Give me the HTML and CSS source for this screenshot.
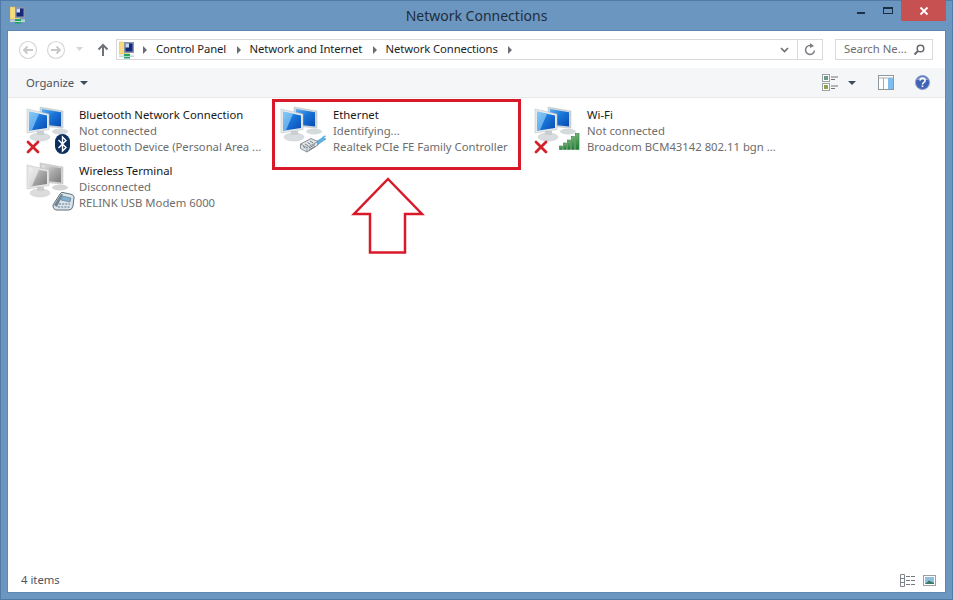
FILE: index.html
```html
<!DOCTYPE html>
<html lang="en">
<head>
<meta charset="utf-8">
<title>Network Connections</title>
<link rel="stylesheet" href="styles.css">
</head>
<body>
<svg class="defs" width="0" height="0" aria-hidden="true">
  <defs>
    <linearGradient id="scr" x1="0" y1="0" x2="1" y2="1">
      <stop offset="0" stop-color="#5fb2f0"/><stop offset=".45" stop-color="#1a76da"/><stop offset="1" stop-color="#0b4ab0"/>
    </linearGradient>
    <linearGradient id="gscr" x1="0" y1="0" x2="1" y2="1">
      <stop offset="0" stop-color="#e8e8e8"/><stop offset=".5" stop-color="#a8a8a8"/><stop offset="1" stop-color="#7c7c7c"/>
    </linearGradient>
    <linearGradient id="bar" x1="0" y1="0" x2="0" y2="1">
      <stop offset="0" stop-color="#6fb56f"/><stop offset="1" stop-color="#1f7a36"/>
    </linearGradient>
    <symbol id="pcs" viewBox="0 0 52 54">
      <ellipse cx="36" cy="29.500" rx="8" ry="3" fill="#d5dadd"/>
      <path d="M16 5 L39 9 V26 L16 24 Z" fill="#cfd6da" stroke="#b4bcc2" stroke-width=".5"/>
      <path d="M18 7 L37 10.300 V24.500 L18 22.500 Z" fill="url(#scr)"/>
      <ellipse cx="16" cy="35" rx="10" ry="4" fill="#d9dddf" stroke="#c3c8cb" stroke-width=".5"/>
      <path d="M13 29 H20 V33 H13 Z" fill="#c9ced1"/>
      <path d="M3 7 L25 12 V27.500 L3 31 Z" fill="#e6eaec" stroke="#b4bcc2" stroke-width=".5"/>
      <path d="M5 9.500 L23 13.500 V26 L5 28.700 Z" fill="url(#scr)"/>
      <path d="M5 9.500 L15 11.700 L8 28.300 L5 28.700 Z" fill="#9fd8fb" opacity=".6"/>
    </symbol>
    <symbol id="pcs-grey" viewBox="0 0 52 54">
      <ellipse cx="36" cy="29.500" rx="8" ry="3" fill="#d5d5d5"/>
      <path d="M16 5 L39 9 V26 L16 24 Z" fill="#d2d2d2" stroke="#bcbcbc" stroke-width=".5"/>
      <path d="M18 7 L37 10.300 V24.500 L18 22.500 Z" fill="url(#gscr)"/>
      <ellipse cx="16" cy="35" rx="10" ry="4" fill="#dcdcdc" stroke="#c6c6c6" stroke-width=".5"/>
      <path d="M13 29 H20 V33 H13 Z" fill="#cccccc"/>
      <path d="M3 7 L25 12 V27.500 L3 31 Z" fill="#e6e6e6" stroke="#bcbcbc" stroke-width=".5"/>
      <path d="M5 9.500 L23 13.500 V26 L5 28.700 Z" fill="url(#gscr)"/>
      <path d="M5 9.500 L15 11.700 L8 28.300 L5 28.700 Z" fill="#f4f4f4" opacity=".65"/>
    </symbol>
    <symbol id="cross" viewBox="0 0 14 14">
      <path d="M2 2 L12 12 M12 2 L2 12" stroke="#d2232a" stroke-width="2.800" stroke-linecap="round" fill="none"/>
    </symbol>
    <symbol id="netfolder" viewBox="0 0 16 18">
      <path d="M0 1 H5 L6 2.500 H10 V13 H0 Z" fill="#f6dc80" stroke="#d9b850" stroke-width=".5"/>
      <rect x="5" y="1" width="10" height="11" fill="#8a97ab"/>
      <rect x="6.500" y="2.500" width="7" height="8" fill="#14287c"/>
      <rect x="6.500" y="2.500" width="3.500" height="4" fill="#c9d8f0"/>
      <rect x="0" y="13.500" width="15" height="1.200" fill="#d5dde0"/>
      <rect x="5" y="13" width="6" height="4.500" fill="#1fa36a"/>
      <rect x="0" y="15" width="15" height="1" fill="#b9d9cc"/>
    </symbol>
  </defs>
</svg>

<div class="window">
  <header class="titlebar">
    <svg class="title-icon" width="16" height="18"><use href="#netfolder"/></svg>
    <h1 class="title">Network Connections</h1>
    <div class="controls">
      <svg class="ctl" width="26" height="21" viewBox="0 0 26 21"><rect x="7" y="12" width="8" height="2" fill="#1b2f45"/></svg>
      <svg class="ctl ctl-max" width="26" height="21" viewBox="0 0 26 21"><rect x="7.500" y="7.500" width="9" height="6" fill="none" stroke="#1b2f45"/><rect x="7" y="7" width="10" height="2" fill="#1b2f45"/></svg>
      <div class="close">
        <svg width="10" height="10" viewBox="0 0 10 10"><path d="M1.500 1.500 L8.500 8.500 M8.500 1.500 L1.500 8.500" stroke="#fff" stroke-width="1.800"/></svg>
      </div>
    </div>
  </header>

  <main class="pane">
    <nav class="navbar">
      <svg class="nav-circle" width="20" height="20" viewBox="0 0 20 20"><circle cx="10" cy="10" r="8.500" fill="none" stroke="#d4d6d8" stroke-width="1.200"/><path d="M15 10 H6 M9.500 6.500 L6 10 L9.500 13.500" fill="none" stroke="#c6c8ca" stroke-width="1.800"/></svg>
      <svg class="nav-circle" width="20" height="20" viewBox="0 0 20 20"><circle cx="10" cy="10" r="8.500" fill="none" stroke="#d4d6d8" stroke-width="1.200"/><path d="M5 10 H14 M10.500 6.500 L14 10 L10.500 13.500" fill="none" stroke="#c6c8ca" stroke-width="1.800"/></svg>
      <svg class="nav-drop" width="8" height="5" viewBox="0 0 8 5"><path d="M0 0 H7 L3.500 4 Z" fill="#d4d6d8"/></svg>
      <svg class="nav-up" width="12" height="14" viewBox="0 0 12 14"><path d="M6 13 V2 M1.500 6.500 L6 2 L10.500 6.500" fill="none" stroke="#6e7378" stroke-width="2"/></svg>
      <div class="address">
        <svg class="addr-icon" width="16" height="18"><use href="#netfolder"/></svg>
        <span class="crumb-sep"></span><span class="crumb">Control Panel</span>
        <span class="crumb-sep"></span><span class="crumb">Network and Internet</span>
        <span class="crumb-sep"></span><span class="crumb">Network Connections</span>
        <span class="crumb-sep"></span>
        <svg class="addr-chev" width="9" height="6" viewBox="0 0 9 6"><path d="M1 1 L4.500 4.500 L8 1" fill="none" stroke="#6b6f73" stroke-width="1.600"/></svg>
        <span class="addr-refresh">
          <svg width="12" height="13" viewBox="0 0 12 13"><path d="M8.500 3.200 A4.500 4.500 0 1 0 10.500 7.500" fill="none" stroke="#7b7f83" stroke-width="1.500"/><path d="M6 0 L10 3 L6 5 Z" fill="#7b7f83"/></svg>
        </span>
      </div>
      <div class="search">
        <span class="search-text">Search Ne...</span>
        <svg width="12" height="12" viewBox="0 0 12 12"><circle cx="7.500" cy="4.500" r="3.300" fill="none" stroke="#666a6e" stroke-width="1.500"/><path d="M5 7 L1.500 10.500" stroke="#666a6e" stroke-width="2"/></svg>
      </div>
    </nav>

    <div class="toolbar">
      <span class="organize">Organize</span>
      <span class="caret"></span>
      <span class="tool-spacer"></span>
      <svg class="tool-views" width="17" height="17" viewBox="0 0 17 17">
        <rect x=".500" y=".500" width="7" height="7" fill="#fff" stroke="#9aa0a6"/><rect x="2" y="2" width="4" height="4" fill="#6d9a80"/>
        <rect x=".500" y="9.500" width="7" height="7" fill="#fff" stroke="#9aa0a6"/><rect x="2" y="11" width="4" height="4" fill="#8fa14b"/>
        <path d="M9 3 H16 M9 5.500 H13 M9 12 H16 M9 14.500 H13" stroke="#6f747a"/>
      </svg>
      <span class="caret caret-views"></span>
      <svg class="tool-pane" width="16" height="15" viewBox="0 0 16 15">
        <rect x=".500" y=".500" width="15" height="14" fill="#fff" stroke="#8f969c"/>
        <path d="M.500 3 H15.500 M5.500 3 V14" stroke="#a5abb0"/>
        <rect x="10" y="3" width="5" height="11" fill="#7fbcf0"/>
      </svg>
      <svg class="tool-help" width="15" height="15" viewBox="0 0 15 15">
        <circle cx="7.500" cy="7.500" r="7" fill="#3f63b4" stroke="#8a9cc9"/>
        <path d="M2 5 A6 6 0 0 1 13 5 Z" fill="#8fa6dc"/>
        <path d="M5.200 5.600 A2.400 2.300 0 1 1 8.600 7.600 Q7.500 8.200 7.500 9.500" fill="none" stroke="#fff" stroke-width="1.500"/>
        <rect x="6.700" y="10.500" width="1.600" height="1.600" fill="#fff"/>
      </svg>
    </div>

    <section class="grid">
      <article class="item">
        <div class="icon">
          <svg class="ic-full" width="52" height="54"><use href="#pcs"/></svg>
          <svg class="ic-cross" width="14" height="14"><use href="#cross"/></svg>
          <svg class="ic-bt" width="15" height="20" viewBox="0 0 15 20">
            <rect width="15" height="20" rx="7.500" fill="#0d2f5e"/>
            <path d="M3.500 6 L11 13.500 L7.500 17 V3 L11 6.500 L3.500 14" fill="none" stroke="#fff" stroke-width="1.400"/>
          </svg>
        </div>
        <div class="text">
          <div class="name">Bluetooth Network Connection</div>
          <div class="sub">Not connected</div>
          <div class="sub">Bluetooth Device (Personal Area ...</div>
        </div>
      </article>

      <article class="item">
        <div class="icon">
          <svg class="ic-full" width="52" height="54"><use href="#pcs"/></svg>
          <svg class="ic-plug" width="27" height="18" viewBox="0 0 27 18">
            <path d="M.500 9 L11 3.500 L18 6.500 L18 10 L7 17 L.500 13.500 Z" fill="#dfe4e8" stroke="#6d767e" stroke-width=".8"/>
            <path d="M.500 9 L7 12.500 L18 6.500 M7 12.500 V17" fill="none" stroke="#6d767e" stroke-width=".7"/>
            <path d="M3 11.500 L5.500 13 M5 9 L8 10.800 M7.500 7.500 L10.500 9.300 M10 6 L13 7.800 M9 13 L15 9.500 M9 15 L15 11.500" stroke="#5d666e" stroke-width=".8"/>
            <path d="M17 6 L23 2.500 L26 4 L18 9.500 Z" fill="#58b4e4" stroke="#4b8db0" stroke-width=".5"/>
            <path d="M22 3 L25.500 .800" stroke="#58b4e4" stroke-width="1.500"/>
          </svg>
        </div>
        <div class="text">
          <div class="name">Ethernet</div>
          <div class="sub">Identifying...</div>
          <div class="sub">Realtek PCIe FE Family Controller</div>
        </div>
      </article>

      <article class="item">
        <div class="icon">
          <svg class="ic-full" width="52" height="54"><use href="#pcs"/></svg>
          <svg class="ic-cross" width="14" height="14"><use href="#cross"/></svg>
          <svg class="ic-bars" width="21" height="17" viewBox="0 0 21 17">
            <rect x=".500" y="13" width="3" height="3.500" fill="url(#bar)" stroke="#2f7d3f" stroke-width=".6"/>
            <rect x="4.500" y="10" width="3" height="6.500" fill="url(#bar)" stroke="#2f7d3f" stroke-width=".6"/>
            <rect x="8.500" y="7" width="3" height="9.500" fill="url(#bar)" stroke="#2f7d3f" stroke-width=".6"/>
            <rect x="12.500" y="3.500" width="3" height="13" fill="url(#bar)" stroke="#2f7d3f" stroke-width=".6"/>
            <rect x="16.500" y=".500" width="3.500" height="16" fill="url(#bar)" stroke="#2f7d3f" stroke-width=".6"/>
          </svg>
        </div>
        <div class="text">
          <div class="name">Wi-Fi</div>
          <div class="sub">Not connected</div>
          <div class="sub">Broadcom BCM43142 802.11 bgn ...</div>
        </div>
      </article>

      <article class="item">
        <div class="icon">
          <svg class="ic-full" width="52" height="54"><use href="#pcs-grey"/></svg>
          <svg class="ic-phone" width="23" height="20" viewBox="0 0 23 20">
            <path d="M1 14 L8 3 Q9 1 11 1.500 L20 3.500 Q22 4.500 22 6.500 L21 15 Q20 19 17 19 H5 Q1 19 1 14 Z" fill="#dbe4ea" stroke="#5f6f7a"/>
            <path d="M2 14 L9 3 L11 3.500 L5 16 Z" fill="#6f8494"/>
            <path d="M10.500 5 L19 7 L18 11 L9 9 Z" fill="#7fb0d4" stroke="#5f7688" stroke-width=".6"/>
            <path d="M7 13 H18 M6 16 H18" stroke="#5f7688" stroke-dasharray="2 1.200"/>
          </svg>
        </div>
        <div class="text">
          <div class="name">Wireless Terminal</div>
          <div class="sub">Disconnected</div>
          <div class="sub">RELINK USB Modem 6000</div>
        </div>
      </article>
    </section>

    <footer class="status">
      <span class="count">4 items</span>
      <svg class="st-details" width="16" height="13" viewBox="0 0 16 13">
        <path d="M.500 .500 H4.500 V12.500 H.500 Z M.500 4.500 H4.500 M.500 8.500 H4.500" fill="#fff" stroke="#7f858a"/>
        <path d="M6 2.500 H15 M6 6.500 H15 M6 10.500 H15" stroke="#74797e" stroke-dasharray="4 1"/>
      </svg>
      <svg class="st-thumb" width="13" height="11" viewBox="0 0 13 11">
        <rect x=".500" y=".500" width="12" height="10" fill="#fff" stroke="#9aa0a6"/>
        <rect x="2" y="2" width="9" height="7" fill="#8fc0e0"/>
        <path d="M2 9 L6 5.500 L11 8 V9 Z" fill="#3d7a66"/>
      </svg>
    </footer>
  </main>

  <svg class="annotation" width="953" height="600" viewBox="0 0 953 600" aria-hidden="true">
    <rect x="273.500" y="100.500" width="246" height="68" fill="none" stroke="#d8192a" stroke-width="3"/>
    <path d="M388 179 L422 214 H405 V252.500 H370 V214 H354 Z" fill="none" stroke="#d8192a" stroke-width="2.500"/>
  </svg>
</div>
</body>
</html>
```

FILE: styles.css
```css
* { box-sizing: border-box; }
html, body { margin: 0; padding: 0; }
body { font-family: "Noto Sans", "Open Sans", "Liberation Sans", sans-serif; font-size: 11.3px; overflow: hidden; }
.defs { position: absolute; }

.window {
  position: relative;
  width: 953px;
  height: 600px;
  display: flex;
  flex-direction: column;
  background: #6b96c0;
  box-shadow: inset 0 0 0 1px #4f7ba6;
}

.titlebar { position: relative; height: 31px; flex: none; display: flex; }
.title-icon { margin: 6px 0 0 10px; }
.title {
  position: absolute;
  left: 0; right: 0; top: 6px;
  margin: 0;
  text-align: center;
  font-size: 14px;
  font-weight: 400;
  line-height: 20px;
  color: #1f2d3b;
}
.controls { margin-left: auto; display: flex; align-items: flex-start; margin-right: 7px; }
.ctl { display: block; }
.ctl-max { margin-right: -1px; }
.close {
  width: 45px;
  height: 21px;
  background: #c75050;
  display: flex;
  align-items: center;
  justify-content: center;
}

.pane {
  flex: 1;
  margin: 0 8px 8px;
  background: #fff;
  display: flex;
  flex-direction: column;
  min-height: 0;
  box-shadow: 0 0 0 1px #5d88b2;
}

.navbar { height: 37px; flex: none; display: flex; align-items: center; padding: 0 12px 0 10px; }
.nav-circle { margin-right: 8px; }
.nav-drop { margin-left: 2px; margin-right: 13px; }
.nav-up { margin-right: 7px; }
.address {
  width: 707px;
  height: 21px;
  display: flex;
  align-items: center;
  border: 1px solid #d9d9d9;
  padding-left: 2px;
  color: #1e1e1e;
}
.addr-icon { margin-right: 8px; }
.crumb-sep { width: 0; height: 0; border-left: 4px solid #6a6e72; border-top: 4px solid transparent; border-bottom: 4px solid transparent; margin-right: 9px; }
.crumb { margin: 0 10.500px 2px 0; letter-spacing: -0.12px; white-space: nowrap; }
.addr-chev { margin-left: auto; margin-right: 8px; }
.addr-refresh { width: 25px; height: 19px; border-left: 1px solid #d9d9d9; display: flex; align-items: center; justify-content: center; }
.search {
  margin-left: 12px;
  width: 98px;
  height: 21px;
  border: 1px solid #d9d9d9;
  padding: 0 7px 0 8px;
  display: flex;
  align-items: center;
  justify-content: space-between;
  color: #6d6d6d;
  white-space: nowrap;
}
.search-text { margin-bottom: 2px; }

.toolbar {
  height: 30px;
  flex: none;
  background: #f5f6f7;
  border-bottom: 1px solid #e8e9ea;
  display: flex;
  align-items: center;
  padding: 0 15px 0 18px;
  color: #4c5560;
}
.organize { margin-right: 6px; }
.caret { width: 0; height: 0; border-top: 4px solid #3d4a5c; border-left: 4px solid transparent; border-right: 4px solid transparent; }
.tool-spacer { flex: 1; }
.caret-views { margin: 0 22px 0 9px; }
.tool-views { display: block; }
.tool-pane { margin-right: 21px; }

.grid {
  flex: 1;
  display: grid;
  grid-template-columns: repeat(auto-fill, 254px);
  grid-auto-rows: 56px;
  align-content: start;
  padding: 4px 0 0 16px;
}
.item { display: flex; height: 56px; min-width: 0; }
.icon { position: relative; width: 52px; height: 54px; flex: none; margin-right: 3px; }
.ic-full { position: absolute; left: 0; top: 0; }
.ic-cross { position: absolute; left: 2px; top: 38px; }
.ic-bt { position: absolute; left: 31px; top: 32px; }
.ic-plug { position: absolute; left: 22px; top: 33px; }
.ic-bars { position: absolute; left: 27px; top: 31px; }
.ic-phone { position: absolute; left: 28px; top: 33px; }
.text { padding-top: 5px; white-space: nowrap; line-height: 16px; }
.name { color: #1a1a1a; }
.sub { color: #6d6d6d; }

.status { height: 23px; flex: none; display: flex; align-items: center; padding: 0 9px 0 13px; color: #4c5560; }
.count { margin: 0 auto 2px 0; }
.st-details { margin-right: 7px; }

.annotation { position: absolute; left: 0; top: 0; pointer-events: none; }
```
